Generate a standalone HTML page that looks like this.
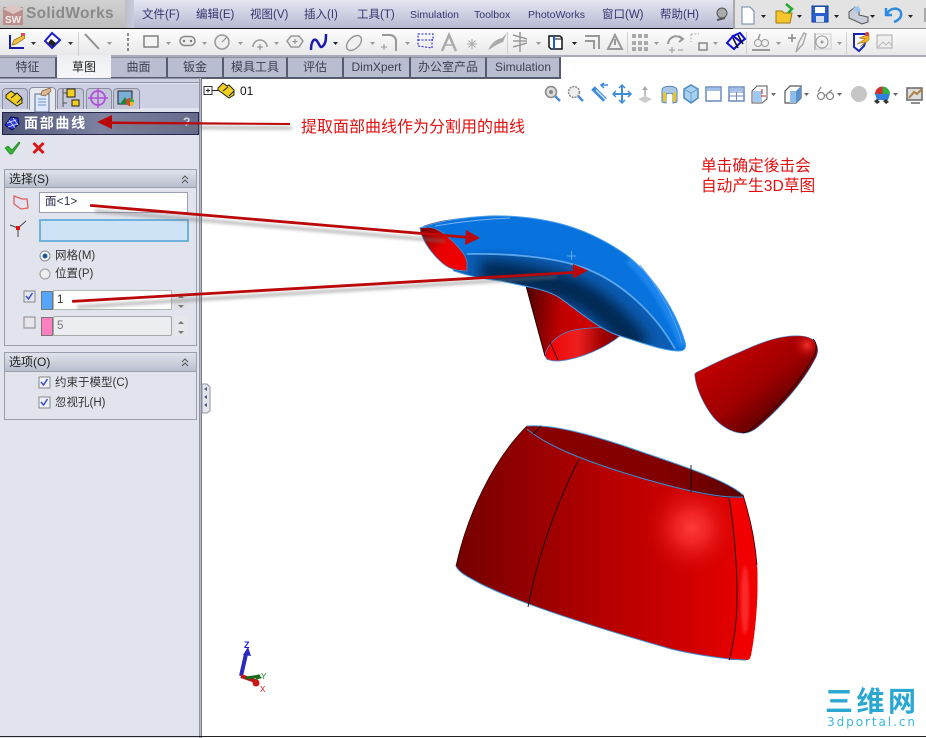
<!DOCTYPE html>
<html><head><meta charset="utf-8">
<style>
html,body{margin:0;padding:0;width:926px;height:738px;overflow:hidden;background:#fff}
body{position:relative;font-family:"Liberation Sans","WenQuanYi Zen Hei","Noto Sans CJK SC",sans-serif;font-size:11px;color:#222}
.a{position:absolute}
.m{position:absolute;top:8px;font-size:11.500px;line-height:14px;color:#34346e;white-space:nowrap}
.t{position:absolute;top:57px;height:19px;background:#b9bdd0;border:1px solid #555c70;border-left:0;border-top:1px solid #8a8fa2;text-align:center;line-height:19px;font-size:12px;color:#3c3f50;box-sizing:content-box;border-bottom:2px solid #555c70;border-right:2px solid #555c70}
.l{position:absolute;white-space:nowrap;font-size:11.500px;line-height:13px;color:#333}
.h{position:absolute;left:9px;font-size:12px;line-height:14px;color:#222;white-space:nowrap}
</style></head><body>
<!-- menu bar -->
<div class="a" style="left:0;top:0;width:733px;height:28px;background:linear-gradient(#e4e6f2,#b7bad2)"></div>
<div class="a" style="left:0;top:0;width:125px;height:28px;background:linear-gradient(#d2d2d2,#bdbdbd)"></div>
<div class="a" style="left:125px;top:0;width:9px;height:28px;background:linear-gradient(90deg,#bdbdc6,#c9cbdf)"></div>
<div class="a" style="left:733px;top:0;width:193px;height:28px;background:#e3e3e3;border-left:2px solid #aaa;box-sizing:border-box"></div>
<div class="a" style="left:0;top:28px;width:733px;height:1px;background:#111"></div>
<div class="a" style="left:733px;top:28px;width:193px;height:1px;background:#999"></div>
<div class="a" style="left:26px;top:5px;font-size:15.500px;line-height:18px;font-weight:bold;color:#8a8a8a;letter-spacing:.3px;white-space:nowrap">SolidWorks</div>
<span class="m" style="left:142px">文件(F)</span><span class="m" style="left:196px">编辑(E)</span><span class="m" style="left:250px">视图(V)</span><span class="m" style="left:304px">插入(I)</span><span class="m" style="left:357px">工具(T)</span><span class="m" style="left:410px;font-size:10.500px">Simulation</span><span class="m" style="left:474px;font-size:10.500px">Toolbox</span><span class="m" style="left:528px;font-size:10.500px">PhotoWorks</span><span class="m" style="left:602px">窗口(W)</span><span class="m" style="left:660px">帮助(H)</span>
<!-- toolbar -->
<div class="a" style="left:0;top:29px;width:926px;height:26px;background:linear-gradient(#fdfdfd,#e8e8ea)"></div>
<div class="a" style="left:0;top:55px;width:926px;height:2px;background:#a9acb8"></div>
<!-- tabs -->
<div class="a" style="left:0;top:57px;width:561px;height:21px;background:#b9bdd0"></div>
<div class="t" style="left:0;width:55px">特征</div>
<div class="t" style="left:111px;width:55px">曲面</div>
<div class="t" style="left:168px;width:54px">钣金</div>
<div class="t" style="left:224px;width:62px">模具工具</div>
<div class="t" style="left:288px;width:54px">评估</div>
<div class="t" style="left:344px;width:65px">DimXpert</div>
<div class="t" style="left:411px;width:74px">办公室产品</div>
<div class="t" style="left:487px;width:72px">Simulation</div>
<div class="a" style="left:57px;top:55px;width:54px;height:23px;background:linear-gradient(#eceef2,#f7f7f9);border-bottom:2px solid #666c80;text-align:center;line-height:24px;font-size:12px;color:#222">草图</div>
<!-- panel -->
<div class="a" style="left:0;top:78px;width:199px;height:660px;background:#e2e4ed"></div>
<div class="a" style="left:0;top:78px;width:199px;height:5px;background:#cfd2e2;border-bottom:1px solid #8e91a6;border-top:1px solid #8e91a6;box-sizing:border-box"></div>
<div class="a" style="left:199px;top:78px;width:3px;height:660px;background:#b5b8c4;border-left:1px solid #8f93a3;border-right:1px solid #7a7e90;box-sizing:border-box"></div>
<div class="a" style="left:0;top:84px;width:199px;height:24px;background:#cdd0e2"></div>
<div class="a" style="left:2px;top:88px;width:24px;height:20px;background:#c4c7d9;border:1px solid #8b8e9f;border-bottom:0;border-radius:4px 4px 0 0"></div>
<div class="a" style="left:29px;top:87px;width:25px;height:22px;background:#e6e8f0;border:1px solid #8b8e9f;border-bottom:0;border-radius:4px 4px 0 0"></div>
<div class="a" style="left:57px;top:88px;width:25px;height:20px;background:#c4c7d9;border:1px solid #8b8e9f;border-bottom:0;border-radius:4px 4px 0 0"></div>
<div class="a" style="left:86px;top:88px;width:24px;height:20px;background:#c4c7d9;border:1px solid #8b8e9f;border-bottom:0;border-radius:4px 4px 0 0"></div>
<div class="a" style="left:113px;top:88px;width:25px;height:20px;background:#c4c7d9;border:1px solid #8b8e9f;border-bottom:0;border-radius:4px 4px 0 0"></div>
<!-- title -->
<div class="a" style="left:2px;top:112px;width:195px;height:21px;background:linear-gradient(90deg,#4f5578,#7d82a0 50%,#666b8c);border:1px solid #23264a"></div>
<div class="a" style="left:24px;top:114px;font-size:14px;line-height:18px;font-weight:bold;color:#fff;letter-spacing:1.700px;white-space:nowrap">面部曲线</div>
<div class="a" style="left:183px;top:115px;font-size:12px;line-height:14px;font-weight:bold;color:#d8d8d8">?</div>
<!-- group 1 -->
<div class="a" style="left:4px;top:169px;width:191px;height:175px;border:1px solid #9a9dac;box-sizing:content-box"></div>
<div class="a" style="left:5px;top:170px;width:191px;height:18px;background:linear-gradient(#dfe2ea,#b9bfce);border-bottom:1px solid #9a9dac;box-sizing:border-box"></div>
<div class="h" style="top:172px">选择(S)</div>
<div class="a" style="left:39px;top:192px;width:147px;height:19px;background:#fff;border:1px solid #9a9fb2;box-sizing:content-box"></div>
<div class="l" style="left:45px;top:196px;color:#2a2a50;letter-spacing:.3px">面&lt;1&gt;</div>
<div class="a" style="left:39px;top:219px;width:146px;height:19px;background:#cfe3f6;border:2px solid #6fb2dd;box-sizing:content-box"></div>
<div class="l" style="left:55px;top:250px">网格(M)</div>
<div class="l" style="left:55px;top:268px">位置(P)</div>
<div class="a" style="left:53px;top:290px;width:117px;height:18px;background:#fff;border:1px solid #b4b4b4"></div>
<div class="l" style="left:57px;top:294px">1</div>
<div class="a" style="left:53px;top:316px;width:117px;height:18px;background:#ecedf1;border:1px solid #a8a8a8;border-radius:2px"></div>
<div class="l" style="left:57px;top:320px;color:#777">5</div>
<div class="a" style="left:41px;top:291px;width:10px;height:17px;background:#55a6fa;border:1px solid #777"></div>
<div class="a" style="left:41px;top:317px;width:10px;height:17px;background:#ff7fc0;border:1px solid #777"></div>
<div class="a" style="left:174px;top:290px;width:14px;height:20px;background:#dfe1e6"></div>
<div class="a" style="left:174px;top:316px;width:14px;height:20px;background:#e6e7ea"></div>
<!-- group 2 -->
<div class="a" style="left:4px;top:352px;width:191px;height:66px;border:1px solid #9a9dac"></div>
<div class="a" style="left:5px;top:353px;width:191px;height:19px;background:linear-gradient(#dfe2ea,#b9bfce);border-bottom:1px solid #9a9dac;box-sizing:border-box"></div>
<div class="h" style="top:355px">选项(O)</div>
<div class="l" style="left:55px;top:377px">约束于模型(C)</div>
<div class="l" style="left:55px;top:397px">忽视孔(H)</div>
<!-- tree text -->
<div class="a" style="left:240px;top:84px;font-size:12px;line-height:14px;color:#111">01</div>

<svg class="a" style="left:0;top:0" width="926" height="738" viewBox="0 0 926 738" xmlns="http://www.w3.org/2000/svg">
<defs>
<clipPath id="bc"><path d="M420 228c20-8 60-13 85-12 50 2 85 14 120 38 30 22 52 60 60 88 2 6-1 9-6 9-15 0-40-9-62-16-18-6-40-25-57-37-12-8-30-11-60-17-18-2-34-6-46-10z"/></clipPath>
<linearGradient id="r1" gradientUnits="userSpaceOnUse" x1="456" y1="540" x2="757" y2="540"><stop offset="0" stop-color="#740000"/><stop offset=".2" stop-color="#900000"/><stop offset=".45" stop-color="#b00000"/><stop offset=".7" stop-color="#c80000"/><stop offset=".95" stop-color="#e60000"/></linearGradient>
<radialGradient id="hl" cx="692" cy="528" r="50" gradientUnits="userSpaceOnUse"><stop offset="0" stop-color="#ff3a3a"/><stop offset=".35" stop-color="#f02424" stop-opacity=".9"/><stop offset="1" stop-color="#d00000" stop-opacity="0"/></radialGradient>
<linearGradient id="r2" gradientUnits="userSpaceOnUse" x1="528" y1="310" x2="612" y2="320"><stop offset="0" stop-color="#5a0000"/><stop offset=".4" stop-color="#c00000"/><stop offset=".75" stop-color="#d00000"/><stop offset="1" stop-color="#600000"/></linearGradient>
<linearGradient id="r3" gradientUnits="userSpaceOnUse" x1="545" y1="345" x2="622" y2="345"><stop offset="0" stop-color="#f00000"/><stop offset=".42" stop-color="#ee2020"/><stop offset=".75" stop-color="#a00000"/><stop offset="1" stop-color="#7a0000"/></linearGradient>
<linearGradient id="r4" gradientUnits="userSpaceOnUse" x1="725" y1="350" x2="778" y2="420"><stop offset="0" stop-color="#c00000"/><stop offset=".55" stop-color="#a00000"/><stop offset=".85" stop-color="#6e0000"/><stop offset="1" stop-color="#7a0000"/></linearGradient>
<radialGradient id="hl2" cx="807" cy="345" r="14" gradientUnits="userSpaceOnUse"><stop offset="0" stop-color="#f03030"/><stop offset="1" stop-color="#c00000" stop-opacity="0"/></radialGradient>
<linearGradient id="r5" gradientUnits="userSpaceOnUse" x1="425" y1="235" x2="460" y2="262"><stop offset="0" stop-color="#8a0000"/><stop offset=".45" stop-color="#e80000"/><stop offset="1" stop-color="#f00000"/></linearGradient>
<linearGradient id="r6" gradientUnits="userSpaceOnUse" x1="527" y1="450" x2="743" y2="480"><stop offset="0" stop-color="#8a0000"/><stop offset=".7" stop-color="#800000"/><stop offset="1" stop-color="#5a0000"/></linearGradient>
<filter id="bl" x="-10%" y="-200%" width="120%" height="500%"><feGaussianBlur stdDeviation="1.600"/></filter>
<filter id="bs" x="-30%" y="-30%" width="160%" height="160%"><feGaussianBlur stdDeviation="7"/></filter>
</defs>

<!-- SW logo -->
<rect x="3" y="7" width="20" height="18" fill="#bd8f8c"/><path d="M3 9L13 4L24 9L13 14Z" fill="#dcc6c4"/>
<text x="5" y="23" font-family="Liberation Sans" font-size="10" font-weight="bold" fill="#f4eeee">SW</text>
<!-- help bulb -->
<circle cx="722" cy="13" r="5" fill="#aaa" stroke="#555"/><path d="M717 20L725 18" stroke="#555" stroke-width="2"/>

<!-- top-right toolbar -->
<path d="M742 7h8l4 4v13h-12z" fill="#fff" stroke="#6a86a8"/><path d="M761 15h5l-2.500 3z" fill="#222"/>
<path d="M776 11h6l2 2h8l-2 10h-14z" fill="#f4c52c" stroke="#a07a10"/><path d="M786 4l6 5-4 4" fill="none" stroke="#22a82a" stroke-width="2.500"/><path d="M797 15h5l-2.500 3z" fill="#222"/>
<rect x="812" y="6" width="16" height="16" fill="#2a5fd0" stroke="#123a90"/><rect x="815" y="7" width="10" height="6" fill="#fff"/><rect x="816" y="16" width="8" height="6" fill="#d5def0"/><path d="M834 15h5l-2.500 3z" fill="#222"/>
<path d="M849 12l6-5 4 4v4l9 2v5l-6 2-13-6z" fill="#c8cdd8" stroke="#555"/><path d="M853 8l5-2 3 4-4 3z" fill="#9cc8f0"/><path d="M870 15h5l-2.500 3z" fill="#222"/>
<path d="M886 8v7h6M887 14c3-7 13-7 14-1 1 5-4 8-7 9" fill="none" stroke="#2a8be0" stroke-width="2.500"/><path d="M908 15h5l-2.500 3z" fill="#222"/>
<path d="M924 8h2v14h-2z" fill="#aaa"/>

<!-- toolbar row -->
<g>
<path d="M10 35v13h14" fill="none" stroke="#1a1aa8" stroke-width="2"/><path d="M12 45l2-5 10-5 1 3-9 6z" fill="#f0c040" stroke="#8a6a10" stroke-width=".7"/><rect x="21" y="33" width="4" height="3" fill="#e05050"/>
<path d="M45 41l7-8 8 7-8 8z" fill="#fff" stroke="#1a1ad0" stroke-width="2"/><path d="M48 43l5 4 3-4-5-4z" fill="#222"/>
<g fill="#333"><path d="M31 42h5l-2.500 3z"/><path d="M68 42h5l-2.500 3z"/></g>
<g fill="#9a9a9a"><path d="M107 42h5l-2.500 3z"/><path d="M166 42h5l-2.500 3z"/><path d="M202 42h5l-2.500 3z"/><path d="M238 42h5l-2.500 3z"/><path d="M274 42h5l-2.500 3z"/><path d="M370 42h5l-2.500 3z"/><path d="M405 42h5l-2.500 3z"/><path d="M536 42h5l-2.500 3z"/><path d="M654 42h5l-2.500 3z"/><path d="M713 42h5l-2.500 3z"/><path d="M776 42h5l-2.500 3z"/><path d="M837 42h5l-2.500 3z"/></g>
<g fill="#222"><path d="M333 42h5l-2.500 3z"/><path d="M572 42h5l-2.500 3z"/></g>
<path d="M78.500 32v24" stroke="#cfcfcf"/><path d="M507.500 32v22M627.500 32v22M746.500 32v22M846.500 32v22" stroke="#cfcfd2" />
<path d="M85 34l14 15" stroke="#8f8f8f" stroke-width="2"/>
<path d="M128 33v20" stroke="#8a8a8a" stroke-width="2" stroke-dasharray="3 2"/>
<rect x="144" y="36" width="14" height="11" fill="#f4f4f4" stroke="#808080" stroke-width="1.500"/>
<rect x="180" y="36.500" width="15" height="9" rx="4.500" fill="#eee" stroke="#888" stroke-width="1.500"/><circle cx="184" cy="41" r="1.200" fill="#777"/><circle cx="191" cy="41" r="1.200" fill="#777"/>
<circle cx="222" cy="42" r="7" fill="#f0f0f0" stroke="#999" stroke-width="1.500"/><path d="M222 42l5-5" stroke="#888"/>
<path d="M253 47a7 7 0 0 1 14 0" fill="none" stroke="#999" stroke-width="1.500"/><path d="M260 44v6M257 47h6" stroke="#888"/>
<path d="M291 36h8l4 5-4 6h-8l-4-6z" fill="#eee" stroke="#999" stroke-width="1.500"/><path d="M295 39v5M292.500 41.500h5" stroke="#888"/>
<path d="M311 50c0-8 3-13 6-9s3 8 6 5 3-7 3-12" fill="none" stroke="#1a1ab0" stroke-width="2.500"/>
<ellipse cx="354" cy="43" rx="9" ry="5.500" transform="rotate(-45 354 43)" fill="#f0f0f0" stroke="#999" stroke-width="1.500"/>
<path d="M382 35h8a6 6 0 0 1 6 6v10" fill="none" stroke="#999" stroke-width="2"/><path d="M384 44v6M381 47h6" stroke="#999"/>
<path d="M418 34h15v5h-1v9l-14-2z" fill="none" stroke="#1a1ad0" stroke-dasharray="2 1.500"/><path d="M418 40h15" stroke="#1a1ad0" stroke-dasharray="2 1.500"/>
<path d="M442 51l7-16 7 16" fill="none" stroke="#aaa" stroke-width="2.500"/><path d="M445 45h8" stroke="#aaa" stroke-width="1.500"/>
<path d="M472 39v10M467 44h10M468.500 40.500l7 7M475.500 40.500l-7 7" stroke="#aaa"/>
<path d="M488 50c4-8 9-11 14-12l5-5-4 9c-6 2-11 6-15 8z" fill="#aaa"/>
<path d="M513 35l14 4M513 41h14M513 47l14-4M520 32v20" stroke="#999" stroke-width="1.500"/>
<path d="M549 36h11l2 2v11h-11l-2-2z" fill="#fff" stroke="#111" stroke-width="1.500"/><path d="M554 36v13" stroke="#1a5ad0" stroke-width="2"/><path d="M555 39h7" stroke="#111"/>
<path d="M585 36h14v13M585 41h9v8" fill="none" stroke="#999" stroke-width="2"/>
<path d="M608 49l7-14 7 14z" fill="none" stroke="#999" stroke-width="2"/><path d="M615 39v6" stroke="#999" stroke-width="2"/>
<g fill="#aaa"><rect x="632" y="34" width="4" height="4"/><rect x="638" y="34" width="4" height="4"/><rect x="644" y="34" width="4" height="4"/><rect x="632" y="41" width="4" height="4"/><rect x="638" y="41" width="4" height="4"/><rect x="644" y="41" width="4" height="4"/><rect x="632" y="47" width="4" height="4"/><rect x="638" y="47" width="4" height="4"/><rect x="644" y="47" width="4" height="4"/></g>
<path d="M668 44a8 8 0 0 1 14-5M679 36l4 3-4 3" fill="none" stroke="#999" stroke-width="2"/><path d="M669 50h6M672 47v6M678 50h5" stroke="#999"/>
<path d="M691 34h8M691 34v8" stroke="#aaa" stroke-dasharray="2 1.500"/><rect x="699" y="43" width="8" height="7" fill="none" stroke="#888" stroke-width="1.500"/>
<path d="M727 43l6-7 8 6-7 7z M733 36l7-3 5 6-4 3z" fill="#f4f4ff" stroke="#0a0ad8" stroke-width="2"/><path d="M733 38l5 10M738 35l5 9" stroke="#111" stroke-width="1.500"/>
<path d="M752 50h18" stroke="#999" stroke-width="2"/><circle cx="758" cy="43" r="3.500" fill="none" stroke="#999"/><circle cx="765" cy="43" r="3.500" fill="none" stroke="#999"/><path d="M760 34l-2 6" stroke="#999" stroke-width="1.500"/>
<path d="M788 38h8M792 34v8" stroke="#888" stroke-width="1.500"/><path d="M796 52l3-10 5-9 2 1-3 10z" fill="none" stroke="#aaa" stroke-width="1.500"/>
<path d="M815 33v17" stroke="#aaa" stroke-width="1.500"/><path d="M815 34h16v15h-16" fill="none" stroke="#ccc"/><circle cx="822" cy="42" r="6" fill="none" stroke="#999"/><circle cx="822" cy="42" r="1.500" fill="#999"/>
<path d="M854 34h13v3l-3 9-5 5-5-4z" fill="#fff" stroke="#1a2ab0" stroke-width="2"/><path d="M869 34l-10 4 6 1-8 5 8-2-5 5 9-7z" fill="#f0b020" stroke="#8a5a10" stroke-width=".5"/><circle cx="867" cy="34" r="2" fill="#d04040"/>
<rect x="877" y="35" width="15" height="13" fill="#eee" stroke="#aaa"/><path d="M878 47l5-5 3 3 3-3 3 4" fill="none" stroke="#bbb"/>
</g>

<!-- panel tabs icons -->
<path d="M6 95l5-4 4 3 2-1 5 5v5l-5 3-11-8z" fill="#f2d020" stroke="#222"/><path d="M11 98l5-4M17 103l5-5" stroke="#222"/>
<path d="M35 94h14v18h-14z" fill="#dbe8ff" stroke="#5a6a8a"/><path d="M38 99h8M38 102h8M38 105h8" stroke="#7090c0"/><path d="M42 91l8-3 1 3-6 5-4-1z" fill="#e0b890" stroke="#7a5a30" stroke-width=".7"/>
<path d="M63 89v18M63 93h4M63 103h4" stroke="#555" fill="none"/><rect x="67" y="89" width="8" height="8" fill="#f2d020" stroke="#222"/><rect x="72" y="100" width="7" height="6" fill="#f2d020" stroke="#222"/>
<circle cx="98" cy="98" r="7" fill="none" stroke="#b050d8" stroke-width="1.800"/><path d="M98 88v20M88 98h20" stroke="#b050d8" stroke-width="1.500"/>
<rect x="118" y="91" width="14" height="13" fill="#7ab0d8" stroke="#222"/><path d="M120 104l5-7 5 7z" fill="#1a8a3a"/><circle cx="130" cy="102" r="4" fill="#e04030"/><path d="M130 98a4 4 0 0 1 4 4h-4z" fill="#2ab040"/><path d="M130 102h4a4 4 0 0 1-4 4z" fill="#e8c020"/>

<!-- tree -->
<rect x="204" y="86.500" width="8" height="8" fill="#fff" stroke="#333"/><path d="M206 90.500h4M208 88.500v4M212 90.500h6" stroke="#222"/>
<path d="M218 88l5-5 4 3 2-1 5 5v5l-5 3-11-8z" fill="#f2d020" stroke="#222"/><path d="M223 91l5-4M229 96l5-5" stroke="#222"/>

<!-- view icons -->
<g>
<circle cx="551" cy="92" r="5.500" fill="#ddd" stroke="#888" stroke-width="1.500"/><path d="M555 96l5 5" stroke="#4a8ad0" stroke-width="2.500"/><circle cx="551" cy="92" r="2" fill="#888"/>
<circle cx="574" cy="92" r="5.500" fill="#eee" stroke="#888" stroke-dasharray="2 1" stroke-width="1.500"/><path d="M578 96l5 5" stroke="#4a8ad0" stroke-width="2.500"/>
<path d="M593 88l12 12" stroke="#3a8ad8" stroke-width="5"/><path d="M596 90l10 10" stroke="#cfe6fa" stroke-width="1.500"/><path d="M608 85h-6M604 83l-3 2 3 3" fill="none" stroke="#3a8ad8" stroke-width="1.500"/>
<path d="M622 85v18M613 94h18" stroke="#3f8fd8" stroke-width="2"/><path d="M619 88l3-3 3 3M619 100l3 3 3-3M616 91l-3 3 3 3M628 91l3 3-3 3" fill="none" stroke="#3f8fd8" stroke-width="1.500"/>
<path d="M645 87v12" stroke="#aaa" stroke-width="1.500"/><path d="M642 90l3-4 3 4z" fill="#aaa"/><path d="M638 99l7-3 7 3-7 4z" fill="#ccc"/>
<path d="M662 90c0-5 15-5 15 0v12l-4 1v-9c-2-1-5-1-7 0v9l-4-1z" fill="#a8c8e8" stroke="#5a80b0"/><path d="M663 92l3 1v9l-3-1zM673 93l3-1v9l-3 1z" fill="#e8c820"/>
<path d="M691 85l7 4v9l-7 5-7-5v-9z" fill="#a8d0f0" stroke="#4a88c0" stroke-width="1.500"/><path d="M684 89l7 4 7-4M691 93v9" stroke="#6aa0d0" fill="none"/>
<rect x="706" y="87" width="15" height="14" fill="#fff" stroke="#6a8ac0" stroke-width="1.500"/><rect x="707" y="88" width="13" height="3" fill="#a0c0e8"/>
<rect x="729" y="87" width="15" height="14" fill="#fff" stroke="#6a8ac0" stroke-width="1.500"/><path d="M729 92h15M729 96h15M736.500 92v9" stroke="#6a8ac0"/><rect x="730" y="88" width="13" height="3" fill="#a0c0e8"/>
<path d="M752 91l5-5h10v13l-5 4h-10z" fill="#fff" stroke="#555"/><rect x="753" y="91" width="9" height="11" fill="#a0c8f0"/><path d="M762 89v5M761 96h5" stroke="#d02020"/>
<path d="M785 91l5-5h11v12l-5 5h-11z" fill="#fff" stroke="#555" stroke-width="1.200"/><path d="M790 91h6v12h-6z" fill="#8fbce8"/><path d="M796 91l5-5v12l-5 5z" fill="#5a94d0"/>
<g fill="none" stroke="#888" stroke-width="1.300"><circle cx="821" cy="96" r="3.500"/><circle cx="830" cy="96" r="3.500"/><path d="M824 95l3 0M818 92l3-5M832 90l-3 2"/></g>
<circle cx="859" cy="94" r="8" fill="#c6c6c6"/>
<path d="M875 94a7.500 7.500 0 0 1 7.500-7.500V94z" fill="#d03030"/><path d="M882.500 86.500A7.500 7.500 0 0 1 890 94h-7.500z" fill="#30b040"/><path d="M875 94h15l-2 6h-11z" fill="#3080e0"/><path d="M874 101l3-2 3 3-3 2zM883 101l3-2 3 3-3 2z" fill="#333"/>
<rect x="907" y="88" width="15" height="12" fill="#ddd" stroke="#666" stroke-width="1.500"/><path d="M909 98l5-6 3 2 5-5" stroke="#b08040" stroke-width="2" fill="none"/><path d="M911 103h9" stroke="#666" stroke-width="1.500"/>
<g fill="#666"><path d="M771 93h5l-2.500 3z"/><path d="M804 93h5l-2.500 3z"/><path d="M837 93h5l-2.500 3z"/><path d="M893 93h5l-2.500 3z"/></g>
</g>

<!-- panel icons -->
<path d="M5 125l6-8 7 1 1 6-7 6z" fill="#2a3ad8" stroke="#0a0a50"/><path d="M9 120l6 8M13 118l5 7M7 123l9-3M8 127l9-3" stroke="#dfe4ff" stroke-width=".8"/>
<path d="M5 148l3-2 4 4 7-8 1 1-8 11h-2z" fill="#35b535" stroke="#1a801a" stroke-width=".7"/>
<path d="M33.500 143l10 10M43.500 143l-10 10" stroke="#d81818" stroke-width="3"/>
<path d="M182 179l3-3 3 3M182 183l3-3 3 3M182 362l3-3 3 3M182 366l3-3 3 3" fill="none" stroke="#555"/>
<path d="M14 196l8 3 5 0 1 9-7 1-7-5z" fill="none" stroke="#e06060" stroke-width="1.300"/>
<path d="M10 225l8 3 8-7M18 228v9" fill="none" stroke="#444"/><rect x="16" y="226" width="4" height="4" fill="#e01010"/>
<circle cx="45" cy="256" r="5" fill="#fff" stroke="#888"/><circle cx="45" cy="256" r="2.500" fill="#1a5a9a"/>
<circle cx="45" cy="274" r="5" fill="#eee" stroke="#999"/>
<rect x="24" y="291" width="11" height="11" fill="#e4e6f0" stroke="#888"/><path d="M26 296l2.500 3 4-6" fill="none" stroke="#3a50c0" stroke-width="1.500"/>
<rect x="24" y="317" width="11" height="11" fill="#e6e6ea" stroke="#888"/>
<rect x="39" y="377" width="11" height="11" fill="#f0f0f8" stroke="#888"/><path d="M41 382l2.500 3 4-6" fill="none" stroke="#3a50c0" stroke-width="1.500"/>
<rect x="39" y="397" width="11" height="11" fill="#f0f0f8" stroke="#888"/><path d="M41 402l2.500 3 4-6" fill="none" stroke="#3a50c0" stroke-width="1.500"/>
<path d="M178 298l3-3 3 3zM178 305l3 3 3-3zM178 324l3-3 3 3zM178 331l3 3 3-3z" fill="#777"/>
<!-- collapse handle -->
<path d="M202 384h5l3 3v24l-3 2h-5z" fill="#e4e6ee" stroke="#8f93a3"/><path d="M207 387l-3 2 3 2zM207 395l-3 2 3 2zM207 403l-3 2 3 2z" fill="#4a5a80"/>

<!-- lower red cone -->
<path d="M525 282l20 74 2 4 35-10 38-15-27-32-30-20z" fill="url(#r2)"/>
<path d="M545 355c2-10 12-20 25-24 12-3 30-4 37-3l14 7c-14 12-40 24-62 26-8 0-14-1-14-6z" fill="url(#r3)" stroke="#3a8fd8" stroke-width=".8"/>
<path d="M550 342l8 18" stroke="#111" stroke-width=".9"/>
<path d="M525 282l20 74" stroke="#200" stroke-width="1"/>
<!-- blue -->
<path d="M424 226c20-7 50-10 80-9l-60 9-16 3z" fill="#8a0000" stroke="#300" stroke-width=".6"/>
<g clip-path="url(#bc)">
<rect x="410" y="205" width="285" height="155" fill="#0872dd"/>
<path d="M467 254c40-1 90 3 120 15 35 14 68 44 88 80l-20 20-240-60z" fill="#0b5eb5"/>
<path d="M480 272c30 2 65 8 90 18 25 10 50 32 70 58" fill="none" stroke="#02284f" stroke-width="26" filter="url(#bs)"/>
<path d="M630 258c24 22 44 56 55 88" fill="none" stroke="#1a86ee" stroke-width="12" filter="url(#bl)"/>
</g>
<path d="M420 228c20-8 60-13 85-12 50 2 85 14 120 38 30 22 52 60 60 88 2 6-1 9-6 9-15 0-40-9-62-16-18-6-40-25-57-37-12-8-30-11-60-17-18-2-34-6-46-10z" fill="none" stroke="#4aa0ea" stroke-width="1"/>
<path d="M467 254c40-1 90 3 120 15 35 14 68 44 88 80" fill="none" stroke="#5aa6ec" stroke-width="1.800"/>
<path d="M435 226c30-5 50-7 75-8" fill="none" stroke="#7ab4ee" stroke-width="1"/>
<path d="M640 265c18 22 34 50 42 78" fill="none" stroke="#5aa6ec" stroke-width=".8"/>
<path d="M567 256h9M571.500 251v9" stroke="#7ab8f0" stroke-width=".8"/>
<path d="M420 228c5-1 10-1 13 0 4 1 7 3 10 5 8 6 15 13 20 20 2 3 4 7 4 10v8c-6 0-12-1-17-3-5-2-9-6-13-10-8-8-16-20-17-30z" fill="url(#r5)" stroke="#3a8fd8" stroke-width=".8"/>
<!-- nose -->
<path d="M697 372c14-7 28-14 43-20 15-7 30-13 43-15 12-2 26-2 31 4 5 6 5 12 0 20-10 19-30 44-56 66-6 5-12 7-18 6-8-1-18-6-26-15-10-12-18-30-19-41-1-3 0-4 2-5z" fill="url(#r4)" stroke="#3a8fd8" stroke-width=".6"/>
<path d="M697 372c14-7 28-14 43-20 15-7 30-13 43-15 12-2 26-2 31 4 5 6 5 12 0 20-10 19-30 44-56 66-6 5-12 7-18 6-8-1-18-6-26-15-10-12-18-30-19-41-1-3 0-4 2-5z" fill="url(#hl2)"/>
<path d="M813 339c6 6 3 14-3 24-10 17-30 42-52 60-5 5-10 9-15 10" fill="none" stroke="#200" stroke-width=".9"/>
<!-- big red -->
<path d="M527 426c-35 35-60 90-71 140 2 6 12 11 25 18 40 20 120 45 190 65 25 6 60 11 75 11 4 0 4-2 5-5 4-20 8-60 6-90-2-30-8-50-14-71z" fill="url(#r1)"/>
<path d="M527 426c-35 35-60 90-71 140 2 6 12 11 25 18 40 20 120 45 190 65 25 6 60 11 75 11 4 0 4-2 5-5 4-20 8-60 6-90-2-30-8-50-14-71z" fill="url(#hl)"/>
<path d="M730 498c5 30 8 70 7 100-1 25-5 50-8 62h17c4 0 4-2 5-5 4-20 8-60 6-90-2-30-8-50-14-71z" fill="#f00000"/>
<ellipse cx="745" cy="600" rx="4" ry="34" fill="#ff3a3a" opacity=".75" filter="url(#bl)"/>
<path d="M527 426c30-2 75 12 115 26 35 12 85 28 101 43 0 3-2 3-5 3-30 1-90-17-130-30-30-10-60-22-81-37z" fill="url(#r6)"/>
<path d="M527 426c30-2 75 12 115 26 35 12 85 28 101 43" fill="none" stroke="#4aa0e0" stroke-width="1"/>
<path d="M527 429c20 17 55 30 85 40 40 13 100 30 131 28" fill="none" stroke="#3a90d8" stroke-width="1"/>
<path d="M456 566c2 6 12 11 25 18 40 20 120 45 190 65 25 6 60 11 75 11" fill="none" stroke="#3a90d8" stroke-width="1"/>
<path d="M579 459c-20 40-40 90-51 148M541 426l-8 8M691 465v28M729 498c5 30 8 65 8 100 0 25-4 50-8 62" fill="none" stroke="#111" stroke-width=".9"/>
<path d="M527 426c-35 35-60 90-71 140M743 495c7 22 12 45 14 70" fill="none" stroke="#300" stroke-width=".8"/>

<!-- triad -->
<path d="M241 676l5-22" stroke="#2a2ac0" stroke-width="4"/><path d="M243 655l5-8 3 9z" fill="#2a2ac0"/>
<text x="244" y="648" font-family="Liberation Sans" font-size="9" font-weight="bold" fill="#1a1af0">Z</text>
<path d="M241 676l17 6" stroke="#b81818" stroke-width="4"/><circle cx="256" cy="683" r="3.500" fill="#c81818"/>
<path d="M246 678l14-2" stroke="#1a6a1a" stroke-width="3"/><path d="M255 680l3-6 4 4z" fill="#1a6a1a"/>
<text x="261" y="679" font-family="Liberation Sans" font-size="8" fill="#10901a">Y</text><text x="260" y="692" font-family="Liberation Sans" font-size="8" fill="#e01010">X</text>

<!-- annotation arrows -->
<g opacity=".55" filter="url(#bl)" stroke="#777" stroke-width="3" fill="none"><path d="M292 128l-178-1"/><path d="M95 211l350 30"/><path d="M77 307l480-30"/></g>
<g fill="#bb0808" stroke="none">
<path d="M290 123l-178-1.500v-6.500l-15 7 15 7v-5l178 1z"/>
<path d="M90.200 204l378 32-.3 2.800-378-32z"/><path d="M466 230l14 8-15 7z"/>
<path d="M72 300l503-29 .2 2.800-503 29z"/><path d="M573 264l15 6.500-15 8z"/>
</g>
<text x="301" y="132" font-family="'Liberation Sans','WenQuanYi Zen Hei','Noto Sans CJK SC',sans-serif" font-size="16" fill="#e01010">提取面部曲线作为分割用的曲线</text>
<text x="701" y="171" font-family="'Liberation Sans','WenQuanYi Zen Hei','Noto Sans CJK SC',sans-serif" font-size="15.700" fill="#e01010">单击确定後击会</text>
<text x="701" y="191" font-family="'Liberation Sans','WenQuanYi Zen Hei','Noto Sans CJK SC',sans-serif" font-size="15.700" fill="#e01010">自动产生3D草图</text>

<!-- watermark -->
<text x="825" y="711" font-family="'Noto Sans CJK SC',sans-serif" font-size="28" font-weight="bold" fill="#2aa8d2" textLength="91" lengthAdjust="spacing">三维网</text>
<text x="827" y="726" font-family="'DejaVu Sans',sans-serif" font-size="12" fill="#3ab8de" textLength="88" lengthAdjust="spacing">3dportal.cn</text>
<path d="M0 736.500h926" stroke="#222"/>
</svg>
</body></html>
